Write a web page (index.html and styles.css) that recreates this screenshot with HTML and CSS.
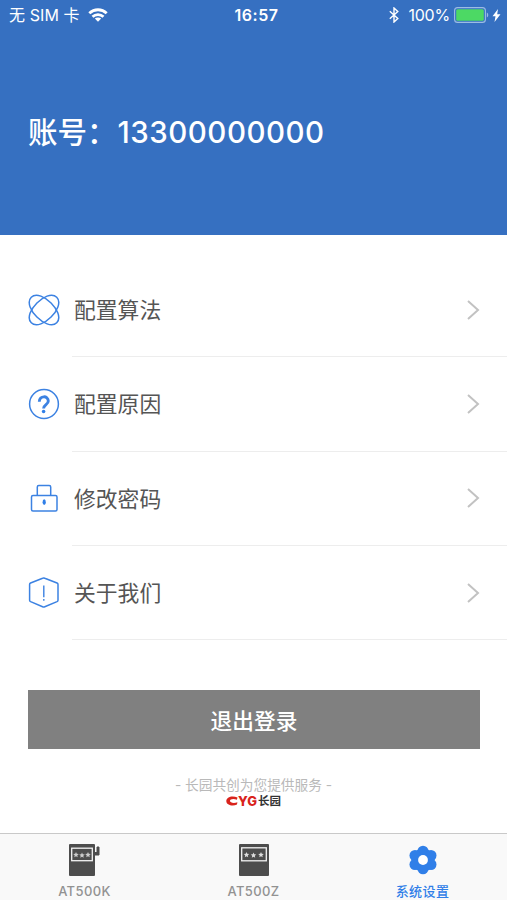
FILE: index.html
```
<!DOCTYPE html>
<html lang="zh-CN">
<head>
    <meta charset="UTF-8">
    <meta name="viewport" content="width=device-width, initial-scale=1.0">
    <title>系统设置</title>
    <link rel="stylesheet" href="styles.css">
</head>
<body>
    <div class="app">
        <header class="header">
            <div class="status-bar">
                <div class="status-left">
                    <span class="carrier">无 SIM 卡</span>
                    <svg class="wifi" width="20" height="14" viewBox="0 0 20 14" fill="none" stroke="#fff" stroke-width="2.8">
                        <path d="M1.3 5.2C6.2.6 13.8.6 18.7 5.2"/>
                        <path d="M4.5 8.7c3.1-2.9 7.9-2.9 11 0"/>
                        <path d="M10 13.800l-3.200-3.200c1.800-1.500 4.600-1.500 6.400 0z" fill="#fff" stroke="none"/>
                    </svg>
                </div>
                <span class="time">16:57</span>
                <div class="status-right">
                    <svg width="10" height="16" viewBox="0 0 10 16" fill="none" stroke="#fff" stroke-width="1.4">
                        <path d="M.8 4.300l8 7.200L5 15V1l3.800 3.500-8 7.200"/>
                    </svg>
                    <span class="percent">100%</span>
                    <svg class="battery" width="35" height="16" viewBox="0 0 35 16">
                        <rect x=".6" y=".6" width="30.800" height="14.800" rx="3" fill="none" stroke="#9dbce4" stroke-width="1.100"/>
                        <rect x="2.200" y="2.200" width="27.600" height="11.600" rx="1.500" fill="#4cd964"/>
                        <path d="M32.800 5.500c1.900.8 1.900 4.200 0 5z" fill="#9dbce4"/>
                    </svg>
                    <svg class="bolt" width="9" height="13" viewBox="0 0 9 13">
                        <path d="M6 0L.5 7.200h3L2.500 13 8.500 5.200H5.200z" fill="#fff"/>
                    </svg>
                </div>
            </div>
            <h1>账号：<span class="phone">13300000000</span></h1>
        </header>

        <ul class="menu">
            <li>
                <svg class="icon" viewBox="0 0 32 32">
                    <path transform="translate(16 16) rotate(45)" d="M-18 0C-18-7-8-10 0-10S18-7 18 0 8 10 0 10-18 7-18 0z"/>
                    <path transform="translate(16 16) rotate(-45)" d="M-18 0C-18-7-8-10 0-10S18-7 18 0 8 10 0 10-18 7-18 0z"/>
                </svg>
                <div class="row">
                    <span>配置算法</span>
                    <svg class="arrow" viewBox="0 0 14 20"><path d="M2 1l10 9-10 9"/></svg>
                </div>
            </li>
            <li>
                <svg class="icon" viewBox="0 0 32 32">
                    <circle cx="16" cy="16" r="14.400"/>
                    <path class="bold" d="M11.300 13.800c0-6.500 9-6.500 9-.8 0 3.700-4.700 3.500-4.700 7.500"/>
                    <circle class="dot" cx="15.600" cy="23.500" r="1.800"/>
                </svg>
                <div class="row">
                    <span>配置原因</span>
                    <svg class="arrow" viewBox="0 0 14 20"><path d="M2 1l10 9-10 9"/></svg>
                </div>
            </li>
            <li>
                <svg class="icon" viewBox="0 0 32 32">
                    <rect x="3.500" y="12.500" width="25.500" height="15.500" rx="1.500"/>
                    <path d="M9.300 12.500V4q0-1.500 1.500-1.500h10.400q1.500 0 1.500 1.500v8.500"/>
                    <ellipse class="dot" cx="16.200" cy="19.200" rx="1.600" ry="2.900"/>
                </svg>
                <div class="row">
                    <span>修改密码</span>
                    <svg class="arrow" viewBox="0 0 14 20"><path d="M2 1l10 9-10 9"/></svg>
                </div>
            </li>
            <li>
                <svg class="icon" viewBox="0 0 32 32">
                    <path d="M14.600 1.200q1.100-.5 2.200 0L29 6q1 .5 1 1.400v15.800q0 .9-1 1.400l-12.200 5.100q-1.100.5-2.200 0L2.600 24.600q-1-.5-1-1.400V7.400q0-.9 1-1.400z"/>
                    <path class="thin" d="M15.800 8.500v11.800M15.800 22v1.700"/>
                </svg>
                <div class="row">
                    <span>关于我们</span>
                    <svg class="arrow" viewBox="0 0 14 20"><path d="M2 1l10 9-10 9"/></svg>
                </div>
            </li>
        </ul>

        <button class="logout" type="button">退出登录</button>

        <footer class="provider">
            <p>- 长园共创为您提供服务 -</p>
            <div class="brand">
                <svg width="12" height="10" viewBox="0 0 12 10">
                    <path d="M11.500 1.500C6-1 .3 1.200.3 5c0 4 6 5.700 10.700 3.600l.4-2.300C7.500 7.700 4 6.700 4 4.800c0-1.800 3.500-2.500 6.900-1.100z" fill="#d9231c"/>
                </svg>
                <span class="brand-red">YG</span><span class="brand-name">长园</span>
            </div>
        </footer>

        <nav class="tabs">
            <a class="tab">
                <svg width="34" height="34" viewBox="0 0 34 34">
                    <rect x="1" y="1" width="26" height="32" rx="1" fill="#4d4d4d"/>
                    <path d="M27 9.500h2V4h2v8h-4z" fill="#4d4d4d" stroke="#4d4d4d"/>
                    <rect x="3.700" y="5.200" width="20.600" height="12.500" fill="none" stroke="#f4f4f4" stroke-width="1.300"/>
                    <path d="M8 9l.8 1.700 2 .2-1.500 1.300.4 2L8 13.200l-1.700 1 .4-2-1.500-1.300 2-.2zM14 9.500l.8 1.700 2 .2-1.500 1.300.4 2-1.700-1-1.700 1 .4-2-1.500-1.300 2-.2zM20 9l.8 1.700 2 .2-1.500 1.300.4 2-1.700-1-1.700 1 .4-2-1.500-1.300 2-.2z" fill="#ccc"/>
                </svg>
                <span>AT500K</span>
            </a>
            <a class="tab">
                <svg width="34" height="34" viewBox="0 0 34 34">
                    <rect x="2" y="1" width="30" height="32" rx="1" fill="#4d4d4d"/>
                    <rect x="4.700" y="4.800" width="24.600" height="13" fill="none" stroke="#f4f4f4" stroke-width="1.300"/>
                    <path d="M9.500 9l.8 1.700 2 .2-1.500 1.300.4 2-1.700-1-1.700 1 .4-2-1.500-1.300 2-.2zM16.500 9.500l.8 1.700 2 .2-1.500 1.300.4 2-1.700-1-1.700 1 .4-2-1.500-1.300 2-.2zM24 9l.8 1.700 2 .2-1.500 1.300.4 2-1.700-1-1.700 1 .4-2-1.500-1.300 2-.2z" fill="#ddd"/>
                </svg>
                <span>AT500Z</span>
            </a>
            <a class="tab active">
                <svg width="34" height="34" viewBox="0 0 34 34" fill="#307fe8">
                    <circle cx="17" cy="17" r="11.500"/>
                    <circle cx="17" cy="8.200" r="5.500"/>
                    <circle cx="17" cy="25.800" r="5.500"/>
                    <circle cx="9" cy="12.500" r="5.500"/>
                    <circle cx="25" cy="12.500" r="5.500"/>
                    <circle cx="9" cy="21.500" r="5.500"/>
                    <circle cx="25" cy="21.500" r="5.500"/>
                    <circle cx="17" cy="17" r="4.900" fill="#fff"/>
                </svg>
                <span>系统设置</span>
            </a>
        </nav>
    </div>
</body>
</html>
```
FILE: styles.css
```
* {
    box-sizing: border-box;
}
body {
    font-family: Inter, "Noto Sans CJK SC", sans-serif;
    background-color: #fff;
    color: #555;
    margin: 0;
}
.app {
    display: flex;
    flex-direction: column;
    height: 900px;
    overflow: hidden;
}
.header {
    height: 235px;
    flex: none;
    background-color: #3670c1;
    color: #fff;
}
.status-bar {
    display: grid;
    grid-template-columns: 1fr auto 1fr;
    align-items: center;
    height: 30px;
    padding: 0 6px 0 9px;
    font-size: 16px;
    line-height: 30px;
    white-space: nowrap;
}
.status-left, .status-right {
    display: flex;
    align-items: center;
}
.status-right {
    justify-content: flex-end;
}
.carrier {
    letter-spacing: 0.1px;
}
.wifi {
    margin-left: 8px;
}
.time {
    margin-left: 3px;
    font-weight: 600;
    letter-spacing: 0.5px;
}
.percent {
    margin: 0 4px 0 9px;
    letter-spacing: -0.2px;
}
.bolt {
    margin-left: 3px;
}
h1 {
    margin: 80px 0 0 28px;
    font-size: 29.5px;
    font-weight: 500;
    line-height: 44px;
    white-space: nowrap;
}
.phone {
    margin-left: 1px;
    letter-spacing: 0.5px;
}
.menu {
    list-style: none;
    margin: 28px 0 0;
    padding: 0;
}
.menu li {
    display: flex;
    align-items: center;
    height: 94.3px;
    padding-left: 28px;
}
.icon {
    width: 32px;
    height: 32px;
    margin-right: 12px;
    fill: none;
    stroke: #3c82e2;
    stroke-width: 1.5;
}
.icon .bold {
    stroke-width: 2.9;
}
.icon .thin {
    stroke-width: 1.4;
}
.icon .dot {
    fill: #307fe8;
    stroke: none;
}
.row {
    display: flex;
    flex: 1;
    align-items: center;
    justify-content: space-between;
    height: 100%;
    padding: 0 27px 0 2px;
    border-bottom: 1px solid #ededed;
    font-size: 21.8px;
}
.row span {
    padding-bottom: 2px;
}
.arrow {
    width: 14px;
    height: 20px;
    fill: none;
    stroke: #c2c2c2;
    stroke-width: 2;
}
.logout {
    flex: none;
    height: 59px;
    margin: 50px 27px 0 28px;
    padding: 0 0 1px;
    border: none;
    background-color: #808080;
    color: #fff;
    font-family: inherit;
    font-size: 21.7px;
    font-weight: 500;
}
.provider {
    margin-top: 26px;
    text-align: center;
}
.provider p {
    margin: 0;
    color: #b9b9b9;
    font-size: 13.7px;
    line-height: 20px;
}
.brand {
    display: flex;
    align-items: center;
    justify-content: center;
    height: 12px;
    font-size: 11.5px;
    font-weight: 700;
    line-height: 12px;
}
.brand-red {
    color: #d9231c;
    font-size: 13px;
    font-weight: 800;
}
.brand-name {
    margin-left: 1px;
    color: #333;
}
.tabs {
    display: grid;
    grid-template-columns: repeat(3, 1fr);
    height: 67px;
    margin-top: auto;
    border-top: 1px solid #c9c9c9;
    background-color: #f9f9f9;
}
.tab {
    display: flex;
    flex-direction: column;
    align-items: center;
    padding-top: 9px;
    color: #929292;
    font-size: 13px;
    font-weight: 500;
    line-height: 18px;
}
.tab span {
    margin-top: 5px;
    letter-spacing: 0.4px;
}
.tab.active {
    color: #307fe8;
}
```
